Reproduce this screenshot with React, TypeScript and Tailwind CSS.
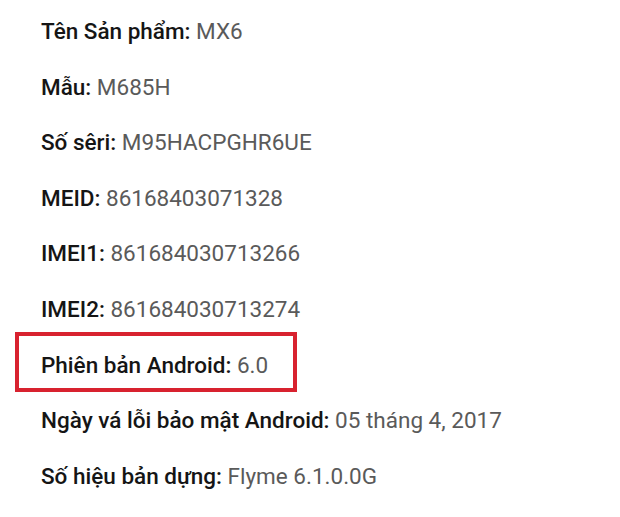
import React from "react";

const rows: [string, string][] = [
  ["Tên Sản phẩm:", "MX6"],
  ["Mẫu:", "M685H"],
  ["Số sêri:", "M95HACPGHR6UE"],
  ["MEID:", "86168403071328"],
  ["IMEI1:", "861684030713266"],
  ["IMEI2:", "861684030713274"],
  ["Phiên bản Android:", "6.0"],
  ["Ngày vá lỗi bảo mật Android:", "05 tháng 4, 2017"],
  ["Số hiệu bản dựng:", "Flyme 6.1.0.0G"],
];

export default function App() {
  return (
    <div
      className="w-[620px] h-[517px] bg-white overflow-hidden pt-[4px] pl-[41px]"
      style={{ fontFamily: "Roboto, 'Noto Sans', sans-serif" }}
    >
      {rows.map(([label, value], i) => (
        <div key={i} className="relative h-[55.6px] leading-[55.6px] text-[22.5px] whitespace-nowrap">
          {i === 6 && (
            <div className="absolute left-[-26px] top-[-6px] w-[282px] h-[60px] border-[4px] border-[#d8222f]" />
          )}
          <span className="font-medium text-[#151515]">{label}</span>{" "}
          <span className="text-[#5a5a5a]">{value}</span>
        </div>
      ))}
    </div>
  );
}
